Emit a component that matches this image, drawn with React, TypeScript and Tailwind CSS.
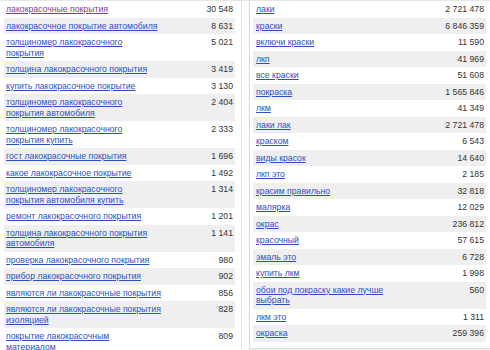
type Row = { q: string[]; n: string; visited?: boolean };

const left: Row[] = [
  { q: ["лакокрасочные покрытия"], n: "30 548", visited: true },
  { q: ["лакокрасочное покрытие автомобиля"], n: "8 631" },
  { q: ["толщиномер лакокрасочного", "покрытия"], n: "5 021" },
  { q: ["толщина лакокрасочного покрытия"], n: "3 419" },
  { q: ["купить лакокрасочное покрытие"], n: "3 130" },
  { q: ["толщиномер лакокрасочного", "покрытия автомобиля"], n: "2 404" },
  { q: ["толщиномер лакокрасочного", "покрытия купить"], n: "2 333" },
  { q: ["гост лакокрасочные покрытия"], n: "1 696" },
  { q: ["какое лакокрасочное покрытие"], n: "1 492" },
  { q: ["толщиномер лакокрасочного", "покрытия автомобиля купить"], n: "1 314" },
  { q: ["ремонт лакокрасочного покрытия"], n: "1 201" },
  { q: ["толщина лакокрасочного покрытия", "автомобиля"], n: "1 141" },
  { q: ["проверка лакокрасочного покрытия"], n: "980" },
  { q: ["прибор лакокрасочного покрытия"], n: "902" },
  { q: ["являются ли лакокрасочные покрытия"], n: "856" },
  { q: ["являются ли лакокрасочные покрытия", "изоляцией"], n: "828" },
  { q: ["покрытие лакокрасочным", "материалом"], n: "809" },
];

const right: Row[] = [
  { q: ["лаки"], n: "2 721 478" },
  { q: ["краски"], n: "6 846 359" },
  { q: ["включи краски"], n: "11 590" },
  { q: ["лкп"], n: "41 969" },
  { q: ["все краски"], n: "51 608" },
  { q: ["покраска"], n: "1 565 846" },
  { q: ["лкм"], n: "41 349" },
  { q: ["лаки лак"], n: "2 721 478" },
  { q: ["краском"], n: "6 543" },
  { q: ["виды красок"], n: "14 640" },
  { q: ["лкп это"], n: "2 185" },
  { q: ["красим правильно"], n: "32 818" },
  { q: ["малярка"], n: "12 029" },
  { q: ["окрас"], n: "236 812" },
  { q: ["красочный"], n: "57 615" },
  { q: ["эмаль это"], n: "6 728" },
  { q: ["купить лкм"], n: "1 998" },
  { q: ["обои под покраску какие лучше", "выбрать"], n: "560" },
  { q: ["лкм это"], n: "1 311" },
  { q: ["окраска"], n: "259 396" },
];

function Table({ rows, textPad }: { rows: Row[]; textPad: string }) {
  return (
    <div className="flex flex-col">
      {rows.map((r, i) => (
        <div
          key={i}
          className={`flex items-start justify-between py-[3px] pr-[2px] ${textPad} ${
            i % 2 === 1 ? "bg-[#efefef]" : "bg-white"
          }`}
        >
          <a
            href="#"
            className={`whitespace-nowrap underline ${
              r.visited ? "text-[#7a3ea6]" : "text-[#2c4fc4]"
            }`}
          >
            {r.q.map((line, j) => (
              <span key={j} className="block">
                {line}
              </span>
            ))}
          </a>
          <span className="whitespace-nowrap text-[#333]">{r.n}</span>
        </div>
      ))}
    </div>
  );
}

export default function App() {
  return (
    <div
      className="flex h-[350px] w-[490px] overflow-hidden border-t border-[#e6e6e6] bg-white text-[8.7px] leading-[10.5px]"
      style={{ fontFamily: '"Liberation Sans", Arial, sans-serif' }}
    >
      <div className="ml-[4px] w-[231px] shrink-0">
        <Table rows={left} textPad="pl-[2px]" />
      </div>
      <div className="ml-[6px] w-px shrink-0 bg-[#e6e6e6]" />
      <div className="ml-[7px] flex h-[348px] w-[241px] shrink-0 flex-col border-b border-l border-[#dcdcdc] pl-[3px] pr-[4px] shadow-[0_1px_2px_rgba(0,0,0,0.08)]">
        <Table rows={right} textPad="pl-[3px]" />
      </div>
    </div>
  );
}
